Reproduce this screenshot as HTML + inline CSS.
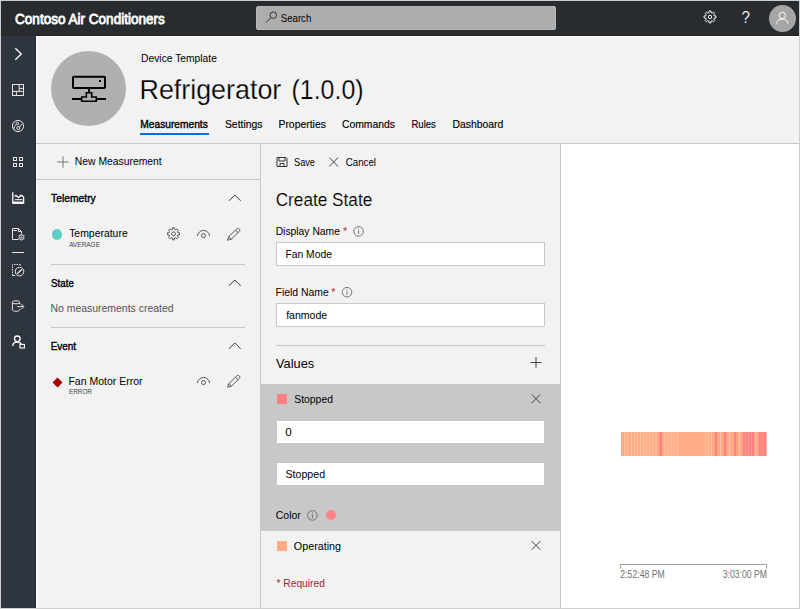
<!DOCTYPE html>
<html><head><meta charset="utf-8">
<style>
html,body{margin:0;padding:0;}
body{width:800px;height:609px;position:relative;overflow:hidden;background:#f2f2f2;font-family:"Liberation Sans",sans-serif;}
.a{position:absolute;}
.t{position:absolute;white-space:pre;line-height:1;transform-origin:0 0;}
svg{position:absolute;left:0;top:0;overflow:visible;}
</style></head><body>
<!-- header -->
<div class="a" style="left:0;top:0;width:800px;height:36px;background:#282c2f"></div>
<!-- sidebar -->
<div class="a" style="left:0;top:36px;width:36px;height:573px;background:#2f353e"></div>
<!-- search -->
<div class="a" style="left:256px;top:6px;width:298px;height:22px;background:#adadad;border:1px solid #b8b8b8;border-radius:2px"></div>
<!-- right white panel -->
<div class="a" style="left:561px;top:144px;width:239px;height:465px;background:#fff"></div>
<!-- lines -->
<div class="a" style="left:36px;top:36px;width:764px;height:1px;background:#fff"></div>
<div class="a" style="left:36px;top:36px;width:1px;height:573px;background:#fff"></div>
<div class="a" style="left:35px;top:36px;width:1px;height:573px;background:#252a31"></div>
<div class="a" style="left:36px;top:35px;width:764px;height:1px;background:#1f2326"></div>
<div class="a" style="left:36px;top:143px;width:764px;height:1px;background:#c8c8c8"></div>
<div class="a" style="left:36px;top:179px;width:225px;height:1px;background:#c8c8c8"></div>
<div class="a" style="left:260px;top:144px;width:1px;height:465px;background:#c8c8c8"></div>
<div class="a" style="left:560px;top:144px;width:1px;height:465px;background:#c8c8c8"></div>
<div class="a" style="left:51px;top:264px;width:194px;height:1px;background:#c8c8c8"></div>
<div class="a" style="left:51px;top:327px;width:194px;height:1px;background:#c8c8c8"></div>
<div class="a" style="left:276px;top:345px;width:269px;height:1px;background:#c8c8c8"></div>
<!-- tab underline -->
<div class="a" style="left:140px;top:133px;width:69px;height:2px;background:#1568f0"></div>
<!-- device circle -->
<div class="a" style="left:51px;top:51px;width:75px;height:75px;border-radius:50%;background:#b0b0b0"></div>
<!-- inputs -->
<div class="a" style="left:276px;top:242px;width:267px;height:22px;background:#fff;border:1px solid #c8c8c8"></div>
<div class="a" style="left:276px;top:303px;width:267px;height:22px;background:#fff;border:1px solid #c8c8c8"></div>
<!-- grey block -->
<div class="a" style="left:261px;top:384px;width:300px;height:147px;background:#c8c8c8"></div>
<div class="a" style="left:277px;top:421px;width:267px;height:22px;background:#fff"></div>
<div class="a" style="left:277px;top:463px;width:267px;height:22px;background:#fff"></div>
<div class="a" style="left:277px;top:394px;width:10px;height:10px;background:#ff8080"></div>
<div class="a" style="left:277px;top:541px;width:10px;height:10px;background:#ffab85"></div>
<div class="a" style="left:326px;top:510px;width:10px;height:10px;border-radius:50%;background:#ff8285"></div>
<!-- left panel markers -->
<div class="a" style="left:51.5px;top:229px;width:10.5px;height:10.5px;border-radius:50%;background:#5fcfc6"></div>
<div class="a" style="left:54.4px;top:379.4px;width:7px;height:7px;background:#a80000;transform:rotate(45deg)"></div>
<!-- avatar -->
<div class="a" style="left:769px;top:5px;width:27px;height:27px;border-radius:50%;background:#a6a6a6"></div>

<svg width="800" height="609" viewBox="0 0 800 609" fill="none">
<!-- state bar -->
<g id="bar"><rect x="621" y="432" width="145.5" height="24" fill="#ffab85"/><rect x="624" y="432" width="1" height="24" fill="#ffc4a6"/><rect x="627" y="432" width="1" height="24" fill="#ffc4a6"/><rect x="631" y="432" width="1" height="24" fill="#ffc4a6"/><rect x="634" y="432" width="1" height="24" fill="#ffc4a6"/><rect x="637" y="432" width="1" height="24" fill="#ffc4a6"/><rect x="640" y="432" width="1" height="24" fill="#ffc4a6"/><rect x="643" y="432" width="1" height="24" fill="#ffc4a6"/><rect x="646" y="432" width="1" height="24" fill="#ffc4a6"/><rect x="649" y="432" width="1" height="24" fill="#ffc4a6"/><rect x="652" y="432" width="1" height="24" fill="#ffc4a6"/><rect x="655.5" y="432" width="1" height="24" fill="#ffc4a6"/><rect x="664.5" y="432" width="1" height="24" fill="#ffc4a6"/><rect x="667.5" y="432" width="1" height="24" fill="#ffc4a6"/><rect x="670.5" y="432" width="1" height="24" fill="#ffc4a6"/><rect x="673.5" y="432" width="1" height="24" fill="#ffc4a6"/><rect x="677" y="432" width="1" height="24" fill="#ffc4a6"/><rect x="705" y="432" width="1" height="24" fill="#ffc4a6"/><rect x="708" y="432" width="1" height="24" fill="#ffc4a6"/><rect x="711" y="432" width="1" height="24" fill="#ffc4a6"/><rect x="720" y="432" width="1" height="24" fill="#ffc4a6"/><rect x="729" y="432" width="1" height="24" fill="#ffc4a6"/><rect x="739" y="432" width="1" height="24" fill="#ffc4a6"/><rect x="754.6" y="432" width="1" height="24" fill="#ffc4a6"/><rect x="745.1" y="432" width="0.8" height="24" fill="#ffa295"/><rect x="748" y="432" width="0.9" height="24" fill="#ffa295"/><rect x="751" y="432" width="0.9" height="24" fill="#ffa295"/><rect x="760.8" y="432" width="0.5" height="24" fill="#ffa295"/><rect x="763.4" y="432" width="0.5" height="24" fill="#ffa295"/><rect x="659.5" y="432" width="2.5" height="24" fill="#ff8181"/><rect x="715" y="432" width="2.2" height="24" fill="#ff8181"/><rect x="724" y="432" width="2.2" height="24" fill="#ff8181"/><rect x="734" y="432" width="2.2" height="24" fill="#ff8181"/><rect x="742.8" y="432" width="2.3" height="24" fill="#ff8181"/><rect x="745.9" y="432" width="2.1" height="24" fill="#ff8181"/><rect x="748.9" y="432" width="2.1" height="24" fill="#ff8181"/><rect x="751.9" y="432" width="2.4" height="24" fill="#ff8181"/><rect x="758.7" y="432" width="2.1" height="24" fill="#ff8181"/><rect x="761.3" y="432" width="2.1" height="24" fill="#ff8181"/><rect x="763.9" y="432" width="2.5" height="24" fill="#ff8181"/></g>
<!-- axis -->
<path d="M620.5,568.5 V564.5 H766.5 V568.5" stroke="#a0a0a0" stroke-width="1"/>

<!-- device icon -->
<g stroke="#000" stroke-width="2">
<rect x="73" y="76.7" width="32" height="11.3" rx="0.8"/>
<path d="M89,88 V93"/>
<path d="M72,99 H81 M97,99 H106"/>
</g>
<path d="M86.3,92.7 h5.4 v4.3 h4.6 v4.3 h-14.6 v-4.3 h4.6 z" stroke="#000" stroke-width="1.6"/>
<rect x="99" y="80" width="2" height="2" fill="#000"/>

<!-- sidebar icons -->
<g stroke="#fff" stroke-width="1.3">
<path d="M15.3,48.3 L21.3,54 L15.3,59.7"/>
</g>
<g stroke="#e6e6e6" stroke-width="1">
<rect x="12.5" y="84.5" width="11" height="11"/>
<path d="M19.2,84.5 V91.4 M12.5,91.4 H23.5 M19.2,88.4 H23.5 M16.4,91.4 V95.5"/>
<!-- gauge -->
<circle cx="18" cy="126" r="5.6"/>
<circle cx="17.4" cy="123.6" r="1.3"/>
<circle cx="18.3" cy="128" r="1.5"/>
<path d="M19.3,127 L22.3,123.8 M16.3,124.5 C14.5,125.5 13.8,127.5 14,129.5"/>
<!-- 4 squares -->
<rect x="13.5" y="157.5" width="3" height="3"/><rect x="19.5" y="157.5" width="3" height="3"/>
<rect x="13.5" y="163.5" width="3" height="3"/><rect x="19.5" y="163.5" width="3" height="3"/>
<!-- doc gear -->
<path d="M21.5,233.5 V231.5 L18.5,228.5 H12.5 V239.5 H18.5 M18.5,228.5 V231.5 H21.5"/>
<path d="M13.5,230.5 H17"/>
<path d="M20.88,235.30 L20.90,234.36 L22.10,234.36 L22.12,235.30 L22.84,235.71 L23.66,235.26 L24.26,236.30 L23.46,236.78 L23.46,237.62 L24.26,238.10 L23.66,239.14 L22.84,238.69 L22.12,239.10 L22.10,240.04 L20.90,240.04 L20.88,239.10 L20.16,238.69 L19.34,239.14 L18.74,238.10 L19.54,237.62 L19.54,236.78 L18.74,236.30 L19.34,235.26 L20.16,235.71 Z" stroke-width="0.9" stroke-linejoin="round"/>
<circle cx="21.5" cy="237.2" r="0.7" stroke-width="0.8"/>
<!-- separator -->
<path d="M12,252.5 H24"/>
<!-- dashed square gauge -->
<path d="M12.5,275.5 V264.5 H20.5 V266" stroke-dasharray="1.5 1"/>
<path d="M12.5,275.5 H15"/>
<circle cx="19.5" cy="271.6" r="4.3"/>
<path d="M17.2,273.8 L21.8,269.4" stroke-width="1.4"/>
<!-- cylinder arrow -->
<ellipse cx="16" cy="302.3" rx="3.6" ry="1.6"/>
<path d="M12.4,302.3 V309.7 C12.4,310.6 14,311.3 16,311.3 C18,311.3 19.6,310.6 19.6,309.7 V309 M19.6,302.3 V304.3"/>
<path d="M17,306.6 H23.5 M21,303.8 L23.8,306.6 L21,309.4"/>
</g>
<g stroke="#fff" stroke-width="1.3">
<!-- chart active -->
<path d="M12.8,192.3 V203.2 H23.6 V197 L21,195.2 L18.6,197.6 L16,195.6 L14.5,196.2"/>
<path d="M13,202.6 H24" stroke-width="2"/>
<path d="M15,199.7 H22.5" stroke-width="1"/>
<!-- person -->
<circle cx="17.3" cy="338.8" r="2.8"/>
<path d="M12.7,346 C12.9,343.6 14.8,342 17.3,342 C19.2,342 20.8,342.9 21.6,344.3"/>
<rect x="20" y="344.4" width="4.4" height="3.6" stroke-width="1.1"/>
</g>

<!-- header icons -->
<g stroke="#fff" stroke-width="1.1">
<path d="M708.90,12.64 L709.06,10.97 L710.94,10.97 L711.10,12.64 L712.23,13.11 L713.53,12.05 L714.85,13.37 L713.79,14.67 L714.26,15.80 L715.93,15.96 L715.93,17.84 L714.26,18.00 L713.79,19.13 L714.85,20.43 L713.53,21.75 L712.23,20.69 L711.10,21.16 L710.94,22.83 L709.06,22.83 L708.90,21.16 L707.77,20.69 L706.47,21.75 L705.15,20.43 L706.21,19.13 L705.74,18.00 L704.07,17.84 L704.07,15.96 L705.74,15.80 L706.21,14.67 L705.15,13.37 L706.47,12.05 L707.77,13.11 Z" stroke-width="1" stroke-linejoin="round"/>
<circle cx="710" cy="16.9" r="1.7" stroke-width="1"/>
<!-- avatar person -->
<circle cx="782.3" cy="15.5" r="3.2" stroke-width="1"/>
<path d="M776.7,23.6 C776.9,20.6 779,19 782.3,19 C785.6,19 787.6,20.6 787.8,23.6" stroke-width="1"/>
</g>
<!-- search icon -->
<g stroke="#333" stroke-width="1">
<circle cx="273.3" cy="15.2" r="3.3"/>
<path d="M270.8,17.8 L266,22.6"/>
</g>

<!-- left panel icons -->
<g stroke="#555" stroke-width="1">
<!-- plus -->
<path d="M57.2,162 H68.6 M63,156.3 V167.7" stroke="#777"/>
<!-- chevrons -->
<path d="M229,200.8 L234.8,195 L240.6,200.8" stroke="#333"/>
<path d="M229,285.8 L234.8,280 L240.6,285.8" stroke="#333"/>
<path d="M229,348.8 L234.8,343 L240.6,348.8" stroke="#333"/>
<!-- gear -->
<path d="M172.37,229.44 L172.55,227.78 L174.45,227.78 L174.63,229.44 L175.78,229.92 L177.09,228.86 L178.44,230.21 L177.38,231.52 L177.86,232.67 L179.52,232.85 L179.52,234.75 L177.86,234.93 L177.38,236.08 L178.44,237.39 L177.09,238.74 L175.78,237.68 L174.63,238.16 L174.45,239.82 L172.55,239.82 L172.37,238.16 L171.22,237.68 L169.91,238.74 L168.56,237.39 L169.62,236.08 L169.14,234.93 L167.48,234.75 L167.48,232.85 L169.14,232.67 L169.62,231.52 L168.56,230.21 L169.91,228.86 L171.22,229.92 Z" stroke-linejoin="round"/>
<circle cx="173.5" cy="233.8" r="1.9"/>
<!-- eyes -->
<path d="M197.3,236 C199,228.5 208,228.5 209.7,236"/>
<circle cx="203.5" cy="235.6" r="2"/>
<path d="M197.3,383 C199,375.5 208,375.5 209.7,383"/>
<circle cx="203.5" cy="382.6" r="2"/>
<!-- pencils -->
<path d="M227.6,240.2 L228.8,236.6 L236.8,228.9 C237.6,228.2 238.6,228.3 239.3,229 C240,229.7 240,230.7 239.3,231.4 L231.3,239.2 Z M235.6,230.2 L238,232.6 M228.8,236.6 L231.3,239.2"/>
<path transform="translate(0,-1)" d="M227.6,388.2 L228.8,384.6 L236.8,376.9 C237.6,376.2 238.6,376.3 239.3,377 C240,377.7 240,378.7 239.3,379.4 L231.3,387.2 Z M235.6,378.2 L238,380.6 M228.8,384.6 L231.3,387.2"/>
</g>
<!-- middle panel icons -->
<g stroke="#444" stroke-width="1">
<!-- save -->
<path d="M277,157.5 H286 L287,158.5 V166.5 H277 Z M279,157.5 V161 H285 V157.5 M280,166.5 V163.5 H284 V166.5" stroke="#333"/>
<!-- cancel X -->
<path d="M329.3,157.6 L338,166.4 M338,157.6 L329.3,166.4"/>
<!-- plus values -->
<path d="M530.5,362.5 H541.5 M536,357 V368"/>
<!-- X stopped -->
<path d="M531.7,394.4 L540.3,403 M540.3,394.4 L531.7,403"/>
<!-- X operating -->
<path d="M531.7,541.2 L540.3,549.8 M540.3,541.2 L531.7,549.8"/>
</g><g stroke="#666" stroke-width="0.9"><!-- info icons -->
<circle cx="358.6" cy="231.4" r="4.8"/><path d="M358.6,230.3 V234 M358.6,228.4 V229.3"/>
<circle cx="347" cy="292.2" r="4.8"/><path d="M347,291.1 V294.8 M347,289.2 V290.1"/>
<circle cx="312.4" cy="515.4" r="4.8"/><path d="M312.4,514.3 V518 M312.4,512.4 V513.3"/>
</g>
</svg>
<!-- question mark -->
<div class="t" style="left:0;top:9px;font-size:17px;color:#fff;-webkit-text-stroke:0.15px #282c2f;transform:translateX(741.5px) scaleX(0.9)">?</div>
<div class="t" style="left:0;top:11px;font-size:15px;font-weight:400;color:#fff;-webkit-text-stroke:0.8px;transform:translateX(15.05px) scaleX(0.9025)">Contoso Air Conditioners</div>
<div class="t" style="left:0;top:13px;font-size:11px;font-weight:400;color:#000;transform:translateX(280.67px) scaleX(0.8800)">Search</div>
<div class="t" style="left:0;top:53px;font-size:11px;font-weight:400;color:#000;transform:translateX(141.11px) scaleX(0.9337)">Device Template</div>
<div class="t" style="left:0;top:76px;font-size:28px;font-weight:400;color:#000;-webkit-text-stroke:0.25px #f2f2f2;transform:translateX(139.49px) scaleX(0.9591)">Refrigerator</div>
<div class="t" style="left:0;top:76px;font-size:28px;font-weight:400;color:#000;-webkit-text-stroke:0.25px #f2f2f2;transform:translateX(291.54px) scaleX(0.8901)">(1.0.0)</div>
<div class="t" style="left:0;top:119px;font-size:11px;font-weight:400;color:#000;-webkit-text-stroke:0.4px;transform:translateX(140.35px) scaleX(0.9263)">Measurements</div>
<div class="t" style="left:0;top:119px;font-size:11px;font-weight:400;color:#000;-webkit-text-stroke:0.15px;transform:translateX(224.96px) scaleX(0.9418)">Settings</div>
<div class="t" style="left:0;top:119px;font-size:11px;font-weight:400;color:#000;-webkit-text-stroke:0.15px;transform:translateX(278.44px) scaleX(0.9465)">Properties</div>
<div class="t" style="left:0;top:119px;font-size:11px;font-weight:400;color:#000;-webkit-text-stroke:0.15px;transform:translateX(341.93px) scaleX(0.9420)">Commands</div>
<div class="t" style="left:0;top:119px;font-size:11px;font-weight:400;color:#000;-webkit-text-stroke:0.15px;transform:translateX(411.47px) scaleX(0.8678)">Rules</div>
<div class="t" style="left:0;top:119px;font-size:11px;font-weight:400;color:#000;-webkit-text-stroke:0.15px;transform:translateX(452.47px) scaleX(0.9448)">Dashboard</div>
<div class="t" style="left:0;top:156px;font-size:11px;font-weight:400;color:#000;transform:translateX(74.87px) scaleX(0.9408)">New Measurement</div>
<div class="t" style="left:0;top:193px;font-size:11px;font-weight:400;color:#000;-webkit-text-stroke:0.4px;transform:translateX(51.05px) scaleX(0.9375)">Telemetry</div>
<div class="t" style="left:0;top:228px;font-size:11px;font-weight:400;color:#000;transform:translateX(69.13px) scaleX(0.9484)">Temperature</div>
<div class="t" style="left:0;top:241px;font-size:8px;font-weight:400;color:#444;transform:translateX(69.17px) scaleX(0.8085)">AVERAGE</div>
<div class="t" style="left:0;top:278px;font-size:11px;font-weight:400;color:#000;-webkit-text-stroke:0.4px;transform:translateX(51.03px) scaleX(0.8878)">State</div>
<div class="t" style="left:0;top:303px;font-size:11px;font-weight:400;color:#555;transform:translateX(50.41px) scaleX(0.9500)">No measurements created</div>
<div class="t" style="left:0;top:341px;font-size:11px;font-weight:400;color:#000;-webkit-text-stroke:0.4px;transform:translateX(50.63px) scaleX(0.9034)">Event</div>
<div class="t" style="left:0;top:376px;font-size:11px;font-weight:400;color:#000;transform:translateX(68.38px) scaleX(0.9560)">Fan Motor Error</div>
<div class="t" style="left:0;top:388px;font-size:8px;font-weight:400;color:#444;transform:translateX(69.02px) scaleX(0.7933)">ERROR</div>
<div class="t" style="left:0;top:157px;font-size:11px;font-weight:400;color:#000;transform:translateX(294.02px) scaleX(0.8338)">Save</div>
<div class="t" style="left:0;top:157px;font-size:11px;font-weight:400;color:#000;transform:translateX(345.69px) scaleX(0.8863)">Cancel</div>
<div class="t" style="left:0;top:191px;font-size:18px;font-weight:400;color:#000;-webkit-text-stroke:0.15px #f2f2f2;transform:translateX(275.68px) scaleX(0.9558)">Create State</div>
<div class="t" style="left:0;top:226px;font-size:11px;font-weight:400;color:#000;transform:translateX(275.64px) scaleX(0.9395)">Display Name</div>
<div class="t" style="left:0;top:226px;font-size:11px;font-weight:400;color:#b0302c;transform:translateX(343.04px) scaleX(0.9810)">*</div>
<div class="t" style="left:0;top:249px;font-size:11px;font-weight:400;color:#000;transform:translateX(285.40px) scaleX(0.9398)">Fan Mode</div>
<div class="t" style="left:0;top:287px;font-size:11px;font-weight:400;color:#000;transform:translateX(275.58px) scaleX(0.9460)">Field Name</div>
<div class="t" style="left:0;top:287px;font-size:11px;font-weight:400;color:#b0302c;transform:translateX(331.37px) scaleX(0.9810)">*</div>
<div class="t" style="left:0;top:310px;font-size:11px;font-weight:400;color:#000;transform:translateX(286.14px) scaleX(0.9603)">fanmode</div>
<div class="t" style="left:0;top:357px;font-size:13.5px;font-weight:400;color:#000;transform:translateX(276.02px) scaleX(0.9482)">Values</div>
<div class="t" style="left:0;top:394px;font-size:11px;font-weight:400;color:#000;transform:translateX(294.21px) scaleX(0.9454)">Stopped</div>
<div class="t" style="left:0;top:427px;font-size:11px;font-weight:400;color:#000;transform:translateX(285.31px) scaleX(1.0612)">0</div>
<div class="t" style="left:0;top:469px;font-size:11px;font-weight:400;color:#000;transform:translateX(285.51px) scaleX(0.9657)">Stopped</div>
<div class="t" style="left:0;top:510px;font-size:11px;font-weight:400;color:#000;transform:translateX(275.77px) scaleX(0.9516)">Color</div>
<div class="t" style="left:0;top:541px;font-size:11px;font-weight:400;color:#000;transform:translateX(293.83px) scaleX(0.9780)">Operating</div>
<div class="t" style="left:0;top:578px;font-size:11px;font-weight:400;color:#a4262c;transform:translateX(276.44px) scaleX(0.9333)">* Required</div>
<div class="t" style="left:0;top:570px;font-size:10px;font-weight:400;color:#707070;transform:translateX(620.36px) scaleX(0.8694)">2:52:48 PM</div>
<div class="t" style="left:0;top:570px;font-size:10px;font-weight:400;color:#707070;transform:translateX(722.72px) scaleX(0.8621)">3:03:00 PM</div>
<!-- outer border -->
<div class="a" style="left:0;top:0;width:798px;height:607px;border:1px solid #cfcfcf;pointer-events:none"></div>
</body></html>
